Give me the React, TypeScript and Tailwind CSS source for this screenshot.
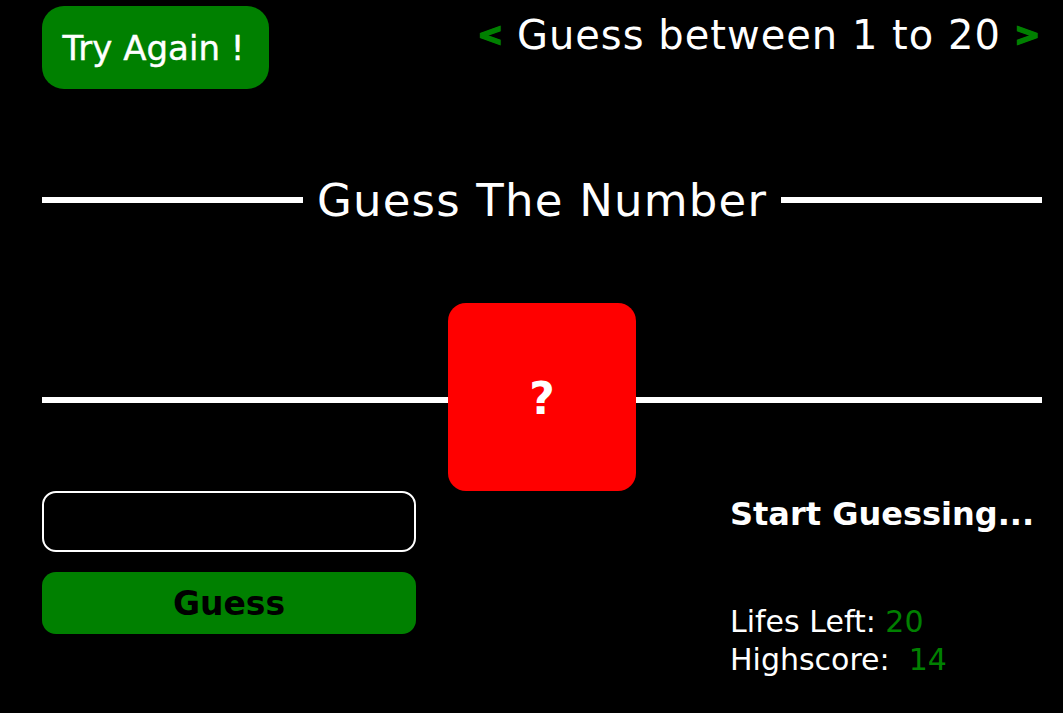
import React from "react";

export default function App() {
  return (
    <div
      className="min-h-screen w-full bg-black text-white"
      style={{ fontFamily: '"DejaVu Sans", "Noto Sans", sans-serif' }}
    >
      <div className="w-[1000px] ml-[42px] pt-[6px]">
        <div className="flex items-start justify-between h-[83px]">
          <button className="h-[83px] w-[227px] rounded-[22px] bg-[#008000] text-[34px] text-white flex items-center justify-center pt-[2px] pr-[4px] [-webkit-text-stroke:0.4px_#ffffff]">
            Try Again !
          </button>
          <div className="flex items-center text-[40px] leading-none tracking-[1px] mt-[9px] mr-[2px]">
            <span className="text-[#008000] font-bold text-[30px] mr-[14px] tracking-normal [-webkit-text-stroke:2px_#008000]">&lt;</span>
            <span>Guess between 1 to 20</span>
            <span className="text-[#008000] font-bold text-[30px] ml-[14px] tracking-normal [-webkit-text-stroke:2px_#008000]">&gt;</span>
          </div>
        </div>

        <div className="flex items-center h-[44px] mt-[89px]">
          <div className="flex-1 h-[6px] bg-white" />
          <h1 className="px-[14px] text-[45px] leading-none tracking-[1.2px] whitespace-nowrap">
            Guess The Number
          </h1>
          <div className="flex-1 h-[6px] bg-white" />
        </div>

        <div className="flex items-center mt-[81px]">
          <div className="flex-1 h-[6px] bg-white mt-[6px]" />
          <div className="w-[188px] h-[188px] rounded-[18px] bg-[#ff0000] flex items-center justify-center text-[44px] font-bold text-white pt-[4px]">
            ?
          </div>
          <div className="flex-1 h-[6px] bg-white mt-[6px]" />
        </div>

        <div className="flex justify-between">
          <div className="w-[374px] flex flex-col gap-[20px]">
            <input
              type="text"
              className="h-[61px] w-full rounded-[14px] border-2 border-white bg-black outline-none text-white px-3"
            />
            <button className="h-[62px] w-full rounded-[14px] bg-[#008000] text-black font-bold text-[33px] flex items-center justify-center pt-[2px]">
              Guess
            </button>
          </div>
          <div className="w-[312px] pt-[7px]">
            <p className="text-[32px] font-bold leading-none whitespace-nowrap">Start Guessing...</p>
            <p className="mt-[73px] text-[30px] leading-[38px] whitespace-pre">
              Lifes Left: <span className="text-[#008000]">20</span>
            </p>
            <p className="text-[30px] leading-[38px] whitespace-pre">
              Highscore:  <span className="text-[#008000]">14</span>
            </p>
          </div>
        </div>
      </div>
    </div>
  );
}
